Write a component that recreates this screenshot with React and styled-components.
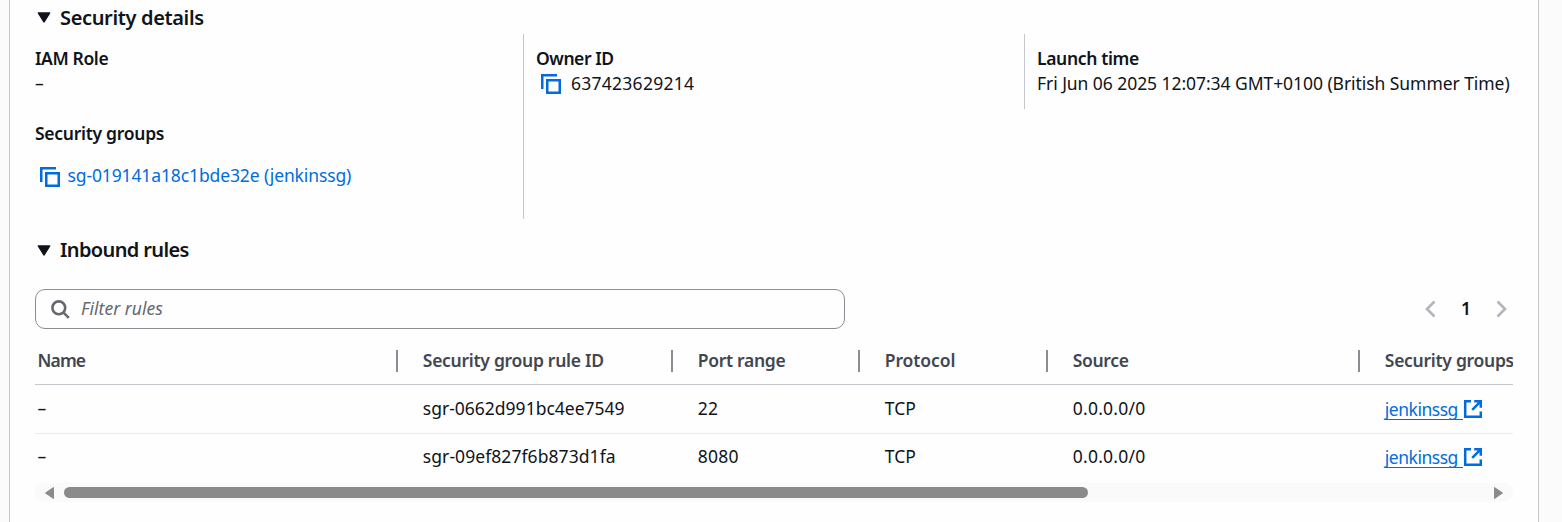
import React from "react";
import styled, { createGlobalStyle } from "styled-components";

const GlobalStyle = createGlobalStyle`
  *, *::before, *::after { box-sizing: border-box; }
  body {
    margin: 0;
    background: #fbfbfb;
    color: #0f141a;
    font-family: "Noto Sans", "Open Sans", sans-serif;
    font-size: 17.5px;
    line-height: 25px;
  }
`;

const Page = styled.div`
  height: 522px;
  padding: 0 23px 0 9px;
  overflow: hidden;
`;

const Panel = styled.main`
  height: 100%;
  padding: 0 25px;
  border: solid #c6c6cd;
  border-width: 0 1px;
  background: #fefefe;
`;

const Text = styled.span`
  letter-spacing: ${(p) => p.$track || 0}px;
  white-space: nowrap;
`;

const SectionHeading = styled.h3`
  display: flex;
  align-items: center;
  gap: 9px;
  height: ${(p) => p.$height}px;
  margin: 0 0 ${(p) => p.$after || 0}px;
  padding-left: 2px;
  font-size: 20px;
  font-weight: 600;
`;

const Columns = styled.section`
  display: grid;
  grid-template-columns: 488px 501px 1fr;
  align-items: start;
  height: 185px;
`;

const Column = styled.div`
  display: flex;
  flex-direction: column;
  gap: 25px;
  height: ${(p) => p.$height}px;
  padding: ${(p) => (p.$divided ? "12px 0 0 12px" : "12px 0 0")};
  border-left: ${(p) => (p.$divided ? "1px solid #c6c6cd" : "0")};
`;

const Field = styled.div`
  display: flex;
  flex-direction: column;
  align-items: flex-start;
`;

const Label = styled.div`
  font-weight: 600;
  height: 25px;
`;

const Value = styled.div`
  display: flex;
  align-items: center;
  gap: ${(p) => p.$gap || 0}px;
  height: 25px;
  padding-left: ${(p) => p.$inset || 0}px;
  margin-top: ${(p) => p.$offset || 0}px;
`;

const Link = styled.a`
  color: #006ce0;
  text-decoration: none;
`;

const Toolbar = styled.div`
  display: flex;
  align-items: center;
  justify-content: space-between;
  height: 40px;
`;

const SearchBox = styled.label`
  display: flex;
  align-items: center;
  gap: 11px;
  width: 810px;
  height: 40px;
  padding-left: 15px;
  border: 1px solid #8c8c94;
  border-radius: 10px;
  color: #656871;
  font-style: italic;
  line-height: 24px;

  span { padding-bottom: 2px; }
`;

const Pager = styled.nav`
  display: flex;
  align-items: center;
  gap: 25px;
  padding-right: 6px;
  font-weight: 600;
`;

const PageNumber = styled.span`
  height: 26px;
  line-height: 24px;
`;

const Table = styled.div`
  overflow: hidden;
  padding-top: 8px;
`;

const Row = styled.div`
  display: grid;
  grid-template-columns: 363px 275px 187px 188px 312px 200px;
  align-items: center;
  height: ${(p) => p.$height}px;
  padding-bottom: ${(p) => p.$lift || 0}px;
  border-bottom: ${(p) => (p.$line ? `1px solid ${p.$line}` : "0")};
`;

const Cell = styled.div`
  padding-left: ${(p) => (p.$first ? 2.5 : 24.8)}px;
`;

const HeaderCell = styled(Cell)`
  height: 22px;
  border-right: ${(p) => (p.$last ? "0" : "2px solid #8c8c94")};
  color: #424650;
  font-weight: 600;
  line-height: 20px;
`;

const ExternalLink = styled(Link)`
  display: flex;
  align-items: center;
`;

const Underlined = styled.span`
  height: 22px;
  width: 78px;
  border-bottom: 1px solid #006ce0;
  line-height: 23px;
  letter-spacing: -0.48px;
  white-space: nowrap;
`;

const ScrollTrack = styled.div`
  display: flex;
  align-items: center;
  gap: 10px;
  height: 19px;
  margin-top: 1px;
  padding: 0 10px 0 9.5px;
  border-radius: 10px;
  background: #fafafa;
`;

const ScrollThumb = styled.div`
  width: 1024px;
  height: 11px;
  margin-right: auto;
  border-radius: 5.5px;
  background: #8a8a8a;
`;

const CopySvg = styled.svg`
  display: block;
  flex: none;
  margin-top: ${(p) => p.$drop || 0}px;
`;

const CaretIcon = () => (
  <svg width="14" height="14" viewBox="0 0 14 14">
    <path d="M1.5 3h11L7 11.8z" fill="#0f141a" stroke="#0f141a" strokeWidth="1.6" strokeLinejoin="round" />
  </svg>
);

const CopyIcon = ({ drop }) => (
  <CopySvg $drop={drop} width="20" height="20" viewBox="0 0 20 20" fill="none" stroke="#006ce0" strokeWidth="2.5">
    <path d="M1.25 15V1.25H16" />
    <path d="M6.25 6.25h12.5v12.5H6.25z" />
  </CopySvg>
);

const SearchIcon = () => (
  <svg width="19" height="19" viewBox="0 0 19 19" fill="none" stroke="#656871" strokeWidth="2.6">
    <circle cx="7.8" cy="7.8" r="6.4" />
    <path d="M12.3 12.3l5.5 5.5" />
  </svg>
);

const ExternalIcon = () => (
  <svg width="20" height="20" viewBox="0 0 20 20" fill="none" stroke="#006ce0" strokeWidth="2.5">
    <path d="M8 2.2H2.2v15.6h15.6V12.5" />
    <path d="M11.2 2.2h6.6v6.6M17.4 2.6L9.2 10.8" />
  </svg>
);

const Chevron = ({ d }) => (
  <svg width="11" height="18" viewBox="0 0 11 18" fill="none" stroke="#b4b4bb" strokeWidth="2.6">
    <path d={d} />
  </svg>
);

const ScrollArrow = ({ d }) => (
  <svg width="9" height="12" viewBox="0 0 9 12">
    <path d={d} fill="#8a8a8a" stroke="#8a8a8a" strokeLinejoin="round" />
  </svg>
);

const headers = [
  ["Name", -0.85],
  ["Security group rule ID", -0.28],
  ["Port range", -0.3],
  ["Protocol", -0.1],
  ["Source", -0.35],
  ["Security groups", -0.28],
];

const rules = [
  { id: "sgr-0662d991bc4ee7549", track: 0, port: "22" },
  { id: "sgr-09ef827f6b873d1fa", track: 0.07, port: "8080" },
];

export default function App() {
  return (
    <Page>
      <GlobalStyle />
      <Panel>
        <SectionHeading $height={34}>
          <CaretIcon />
          <Text $track={-0.35}>Security details</Text>
        </SectionHeading>
        <Columns>
          <Column $height={185}>
            <Field>
              <Label><Text $track={-0.38}>IAM Role</Text></Label>
              <Value>–</Value>
            </Field>
            <Field>
              <Label><Text $track={-0.28}>Security groups</Text></Label>
              <Value $gap={7.5} $inset={5} $offset={17}>
                <CopyIcon drop={2} />
                <Link><Text $track={-0.12}>sg-019141a18c1bde32e (jenkinssg)</Text></Link>
              </Value>
            </Field>
          </Column>
          <Column $divided $height={185}>
            <Field>
              <Label><Text $track={-0.45}>Owner ID</Text></Label>
              <Value $gap={10} $inset={5}>
                <CopyIcon />
                <Text $track={0.26}>637423629214</Text>
              </Value>
            </Field>
          </Column>
          <Column $divided $height={75}>
            <Field>
              <Label><Text $track={-0.35}>Launch time</Text></Label>
              <Value>
                <Text $track={-0.06}>Fri Jun 06 2025 12:07:34 GMT+0100 (British Summer Time)</Text>
              </Value>
            </Field>
          </Column>
        </Columns>
        <SectionHeading $height={61} $after={9}>
          <CaretIcon />
          <Text $track={-0.63}>Inbound rules</Text>
        </SectionHeading>
        <Toolbar>
          <SearchBox>
            <SearchIcon />
            <Text $track={0.05}>Filter rules</Text>
          </SearchBox>
          <Pager>
            <Chevron d="M9.5 1.5L2 9l7.5 7.5" />
            <PageNumber>1</PageNumber>
            <Chevron d="M1.5 1.5L9 9l-7.5 7.5" />
          </Pager>
        </Toolbar>
        <Table>
          <Row $height={48} $line="#c6c6cd">
            {headers.map(([label, track], i) => (
              <HeaderCell key={label} $first={i === 0} $last={i === headers.length - 1}>
                <Text $track={track}>{label}</Text>
              </HeaderCell>
            ))}
          </Row>
          {rules.map((rule, i) => (
            <Row key={rule.id} $height={i === 0 ? 49 : 48} $lift={i === 0 ? 1 : 3} $line={i === 0 && "#ebebf0"}>
              <Cell $first>–</Cell>
              <Cell><Text $track={rule.track}>{rule.id}</Text></Cell>
              <Cell><Text $track={0.2}>{rule.port}</Text></Cell>
              <Cell>TCP</Cell>
              <Cell><Text $track={0.22}>0.0.0.0/0</Text></Cell>
              <Cell>
                <ExternalLink>
                  <Underlined>jenkinssg</Underlined>
                  <ExternalIcon />
                </ExternalLink>
              </Cell>
            </Row>
          ))}
        </Table>
        <ScrollTrack>
          <ScrollArrow d="M8.5 0.5v11L0.5 6z" />
          <ScrollThumb />
          <ScrollArrow d="M0.5 0.5v11l8-5.5z" />
        </ScrollTrack>
      </Panel>
    </Page>
  );
}
